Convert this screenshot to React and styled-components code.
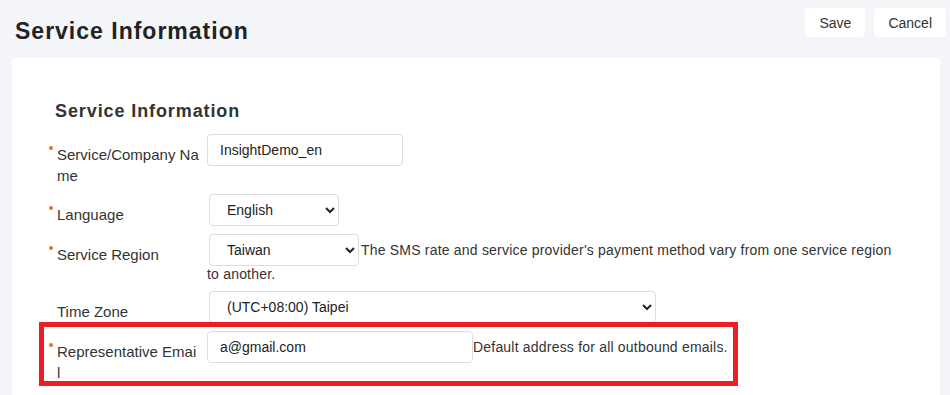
import React from 'react';
import styled, { createGlobalStyle } from 'styled-components';

const GlobalStyle = createGlobalStyle`
	body {
		margin: 0;
		background: #f4f5f9;
		font-family: 'Liberation Sans', Arial, sans-serif;
		color: #333;
	}
`

const Header = styled.header`
	display: flex;
	justify-content: space-between;
	align-items: flex-start;
	height: 58px;
	padding: 8px 4px 0 15px;
	box-sizing: border-box;
`

const Title = styled.h1`
	margin: 12px 0 0;
	font-size: 23px;
	line-height: 23px;
	letter-spacing: 1px;
	font-weight: bold;
	color: #222;
`

const Actions = styled.div`
	display: flex;
	gap: 9px;
`

const ActionButton = styled.button`
	height: 29px;
	padding: 0 14px;
	border: none;
	border-radius: 4px;
	background: #fff;
	font-family: inherit;
	font-size: 14px;
	color: #333;
	cursor: pointer;
`

const Card = styled.section`
	margin: 0 10px 0 12px;
	padding: 43px 37px;
	background: #fff;
	border-radius: 4px;
`

const SectionTitle = styled.h2`
	margin: 0 0 12px 6px;
	font-size: 18px;
	line-height: 21px;
	letter-spacing: 0.9px;
	font-weight: bold;
	color: #333;
`

const Row = styled.div`
	display: flex;
	align-items: flex-start;
	margin-bottom: 8px;
	position: relative;

	${({highlighted}) => highlighted && `
		&::after {
			content: '';
			position: absolute;
			top: -9px;
			left: -10px;
			width: 699px;
			height: 64px;
			box-sizing: border-box;
			border: 5px solid #ee1c24;
			pointer-events: none;
		}
	`}
`

const Label = styled.label`
	display: flex;
	align-items: flex-start;
	width: 158px;
	flex-shrink: 0;
	padding-top: 10px;
	font-size: 15px;
	line-height: 21px;
	color: #333;
`

const RequiredDot = styled.span`
	width: 4px;
	height: 4px;
	margin: 2px 4px 0 0;
	border-radius: 50%;
	background: #f26b2a;
	visibility: ${({required}) => required ? 'visible' : 'hidden'};
`

const LabelText = styled.span`
	width: 142px;
	word-break: break-all;
`

const Field = styled.div`
	flex: 1;
	font-size: 14px;
	line-height: 17px;
	letter-spacing: 0.2px;
	color: #333;
`

const TextInput = styled.input`
	width: ${({w}) => w}px;
	height: 32px;
	box-sizing: border-box;
	padding: 0 12px;
	border: 1px solid #ddd;
	border-radius: 4px;
	font-family: inherit;
	font-size: 14px;
	letter-spacing: 0;
	color: #222;
	outline: none;
`

const Select = styled.select`
	width: ${({w}) => w}px;
	height: 32px;
	margin: 0 2px;
	box-sizing: border-box;
	padding: 0 13px;
	border: 1px solid #ddd;
	border-radius: 4px;
	background: #fff;
	font-family: inherit;
	font-size: 14px;
	letter-spacing: 0;
	color: #222;
	outline: none;
`

const FormRow = ({ label, required, highlighted, children }) => (
	<Row highlighted={highlighted}>
		<Label>
			<RequiredDot required={required} />
			<LabelText>{label}</LabelText>
		</Label>
		<Field>{children}</Field>
	</Row>
)

export default function App() {
	return (
		<>
			<GlobalStyle />
			<Header>
				<Title>Service Information</Title>
				<Actions>
					<ActionButton>Save</ActionButton>
					<ActionButton>Cancel</ActionButton>
				</Actions>
			</Header>
			<Card>
				<SectionTitle>Service Information</SectionTitle>
				<FormRow label="Service/Company Name" required>
					<TextInput w={196} defaultValue="InsightDemo_en" />
				</FormRow>
				<FormRow label="Language" required>
					<Select w={130} defaultValue="en">
						<option value="en">English</option>
						<option value="zh">中文</option>
					</Select>
				</FormRow>
				<FormRow label="Service Region" required>
					<Select w={150} defaultValue="tw">
						<option value="tw">Taiwan</option>
						<option value="jp">Japan</option>
					</Select>The SMS rate and service provider's payment method vary from one service region to another.
				</FormRow>
				<FormRow label="Time Zone">
					<Select w={447} defaultValue="taipei">
						<option value="taipei">(UTC+08:00) Taipei</option>
						<option value="tokyo">(UTC+09:00) Tokyo</option>
					</Select>
				</FormRow>
				<FormRow label="Representative Email" required highlighted>
					<TextInput w={266} defaultValue="a@gmail.com" />Default address for all outbound emails.
				</FormRow>
			</Card>
		</>
	);
}
